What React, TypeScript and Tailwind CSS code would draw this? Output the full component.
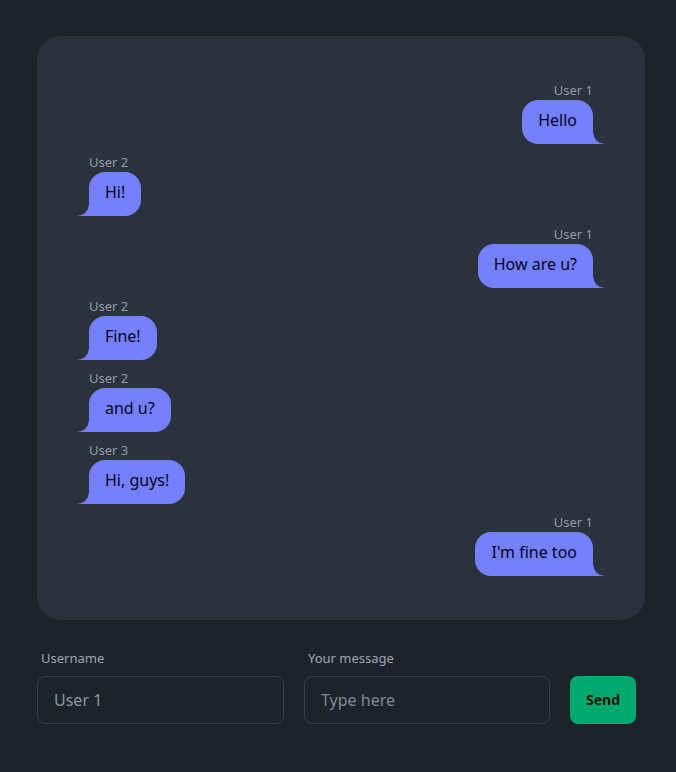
import React from "react";

type Msg = { user: string; text: string; mine: boolean };

const messages: Msg[] = [
  { user: "User 1", text: "Hello", mine: true },
  { user: "User 2", text: "Hi!", mine: false },
  { user: "User 1", text: "How are u?", mine: true },
  { user: "User 2", text: "Fine!", mine: false },
  { user: "User 2", text: "and u?", mine: false },
  { user: "User 3", text: "Hi, guys!", mine: false },
  { user: "User 1", text: "I'm fine too", mine: true },
];

function Tail({ flip }: { flip?: boolean }) {
  return (
    <svg
      width="12"
      height="12"
      viewBox="0 0 12 12"
      className={flip ? "shrink-0 -scale-x-100" : "shrink-0"}
    >
      <path d="M0 0 Q1 11 12 12 L0 12 Z" fill="#7480ff" />
    </svg>
  );
}

function ChatMessage({ msg }: { msg: Msg }) {
  return (
    <div
      className={`flex flex-col py-1 ${msg.mine ? "items-end" : "items-start"}`}
    >
      <div
        className={`text-[13px] leading-5 text-[#939eab] ${
          msg.mine ? "mr-3" : "ml-3"
        }`}
      >
        {msg.user}
      </div>
      <div className="flex items-end">
        {!msg.mine && <Tail flip />}
        <div
          className={`min-h-11 px-4 py-2 text-base leading-6 bg-[#7480ff] text-[#050617] rounded-2xl ${
            msg.mine ? "rounded-br-none" : "rounded-bl-none"
          }`}
        >
          {msg.text}
        </div>
        {msg.mine && <Tail />}
      </div>
    </div>
  );
}

export default function App() {
  return (
    <div
      className="min-h-[772px] bg-[#1d232a] pl-[37px] pt-[36px]"
      style={{ fontFamily: '"Noto Sans", sans-serif' }}
    >
      <div className="w-[608px] rounded-3xl bg-[#2a323c] p-10">
        {messages.map((m, i) => (
          <ChatMessage key={i} msg={m} />
        ))}
      </div>
      <form
        className="mt-5 flex items-end gap-5"
        onSubmit={(e) => e.preventDefault()}
      >
        <div className="flex w-[247px] flex-col">
          <label className="px-1 py-2 text-[13px] leading-5 text-[#a0a8b3]">
            Username
          </label>
          <input
            defaultValue="User 1"
            className="h-12 w-full rounded-lg border border-[#383f48] bg-[#1d232a] px-4 text-base text-[#8b96a4] outline-none"
          />
        </div>
        <div className="flex w-[246px] flex-col">
          <label className="px-1 py-2 text-[13px] leading-5 text-[#a0a8b3]">
            Your message
          </label>
          <input
            placeholder="Type here"
            className="h-12 w-full rounded-lg border border-[#383f48] bg-[#1d232a] px-4 text-base text-[#8b96a4] placeholder:text-[#7d8896] outline-none"
          />
        </div>
        <button
          type="submit"
          className="h-12 w-[66px] shrink-0 rounded-lg bg-[#00a96e] text-sm font-bold text-[#00140a]"
        >
          Send
        </button>
      </form>
    </div>
  );
}
